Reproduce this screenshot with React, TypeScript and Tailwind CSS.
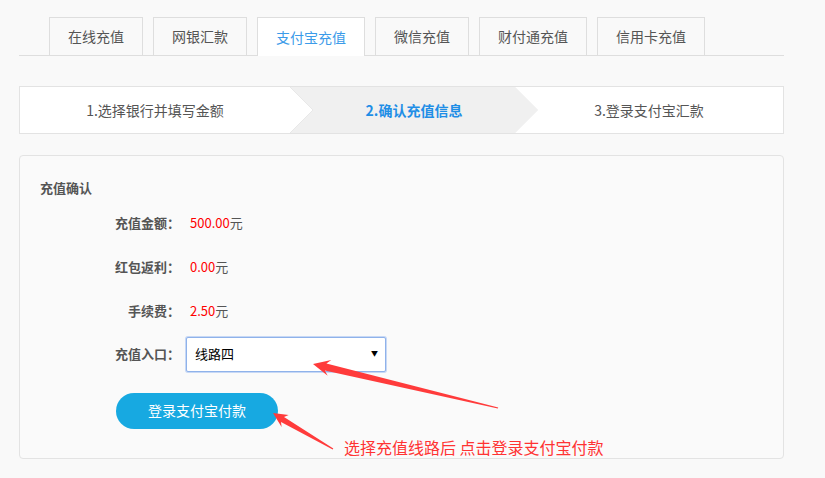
import { useState } from "react";

const tabs = ["在线充值", "网银汇款", "支付宝充值", "微信充值", "财付通充值", "信用卡充值"];
const tabWidths = ["w-[94px]", "w-[94px]", "w-[108px]", "w-[94px]", "w-[108px]", "w-[108px]"];

const rows = [
  { label: "充值金额：", value: "500.00" },
  { label: "红包返利：", value: "0.00" },
  { label: "手续费：", value: "2.50" },
];

const App = () => {
  const [active] = useState(2);
  const [line, setLine] = useState("线路四");

  return (
    <div className="relative w-[825px] h-[478px] overflow-hidden bg-[#f9f9f9] font-['Microsoft_YaHei','Noto_Sans_CJK_SC',sans-serif] text-[#555]">
      <div className="px-[19px] pt-[17px] w-[784px] box-content">
        {/* Tabs */}
        <div className="flex gap-[10px] pl-[30px] border-b border-[#dedede] w-[765px]">
          {tabs.map((t, i) => (
            <div
              key={t}
              className={
                i === active
                  ? `${tabWidths[i]} h-[39px] -mb-px flex items-center justify-center border border-b-0 border-[#dedede] bg-white text-[14px] text-[#3b9be9]`
                  : `${tabWidths[i]} h-[38px] flex items-center justify-center border border-b-0 border-[#dedede] bg-[#f9f9f9] text-[14px] text-[#555]`
              }
            >
              {t}
            </div>
          ))}
        </div>

        {/* Steps */}
        <div className="mt-[30px] w-[765px] h-[48px] flex border border-[#e3e3e3] bg-white text-[14px]">
          <div className="w-[270px] flex items-center justify-center text-[#555]">1.选择银行并填写金额</div>
          <div className="relative w-[225px] bg-[#f0f0f0] flex items-center justify-center pl-[23px]">
            <svg className="absolute left-0 top-0" width="24" height="46" viewBox="0 0 24 46">
              <polygon points="0,0 23,23 0,46" fill="#fff" />
              <polyline points="0,0 23,23 0,46" fill="none" stroke="#e8e8e8" strokeWidth="1" />
            </svg>
            <span className="font-bold text-[#1f8ee6]">2.确认充值信息</span>
          </div>
          <div className="relative flex-1 flex items-center justify-center text-[#555]">
            <svg className="absolute left-0 top-0" width="24" height="46" viewBox="0 0 24 46">
              <polygon points="0,0 23,23 0,46" fill="#f0f0f0" />
              <polyline points="0,0 23,23 0,46" fill="none" stroke="#f4f4f4" strokeWidth="1" />
            </svg>
            <span>3.登录支付宝汇款</span>
          </div>
        </div>

        {/* Confirm card */}
        <div className="mt-[21px] w-[765px] h-[304px] rounded-[4px] border border-[#e3e3e3] bg-[#fafafa]">
          <div className="pl-[20px] pt-[22px] text-[13px] font-bold text-[#555]">充值确认</div>

          <div className="mt-[17px] flex flex-col gap-[27px] text-[13px]">
            {rows.map((r) => (
              <div key={r.label} className="flex items-center h-[17px]">
                <div className="w-[160px] text-right font-bold text-[#555]">{r.label}</div>
                <div className="ml-[10px]">
                  <span className="text-[#ff0000]">{r.value}</span>
                  <span className="text-[#555]">元</span>
                </div>
              </div>
            ))}
          </div>

          <div className="mt-[17px] flex items-center">
            <div className="w-[160px] text-right text-[13px] font-bold text-[#555]">充值入口：</div>
            <div className="relative ml-[6px] w-[200px] h-[35px]">
              <select
                value={line}
                onChange={(e) => setLine(e.target.value)}
                className="appearance-none w-full h-full bg-white border border-[#8fb2ea] rounded-[2px] pl-[8px] text-[13px] text-black outline-none shadow-[0_0_0_1px_#c7d8f5]"
              >
                <option>线路一</option>
                <option>线路二</option>
                <option>线路三</option>
                <option>线路四</option>
              </select>
              <span className="pointer-events-none absolute right-[8px] top-[11px] text-[7px] leading-[10px] text-black">▼</span>
            </div>
          </div>

          <button className="mt-[21px] ml-[96px] w-[162px] h-[36px] rounded-full bg-[#17a9e1] text-white text-[14px]">
            登录支付宝付款
          </button>
        </div>
      </div>

      {/* Annotation */}
      <svg className="absolute left-0 top-0 pointer-events-none" width="825" height="478" viewBox="0 0 825 478">
        <polygon
          points="313,364 331.3,360.1 326.4,363.6 498.2,407.4 497.8,408.6 324.8,370.4 327.7,375.7"
          fill="#ff3b3b"
        />
        <polygon
          points="273,413 288.6,415.1 284,416.9 333.3,448.6 332.7,449.4 281,422.1 281.6,427.1"
          fill="#ff3b3b"
        />
      </svg>
      <div className="absolute left-[344px] top-[437px] text-[16px] leading-[20px] text-[#ff3333] whitespace-nowrap">
        选择充值线路后 点击登录支付宝付款
      </div>
    </div>
  );
};

export default App;
